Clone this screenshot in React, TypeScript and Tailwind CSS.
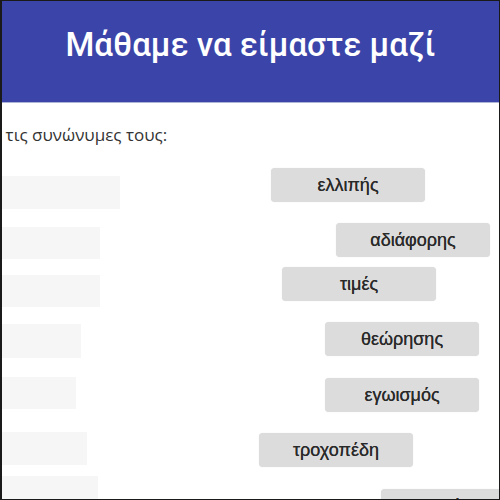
import React from "react";

const boxes = [
  { mt: "mt-[0px]", w: "w-[118px]", h: "h-[33px]" },
  { mt: "mt-[18px]", w: "w-[98px]", h: "h-[32px]" },
  { mt: "mt-[16px]", w: "w-[98px]", h: "h-[32px]" },
  { mt: "mt-[17px]", w: "w-[79px]", h: "h-[34px]" },
  { mt: "mt-[19px]", w: "w-[74px]", h: "h-[32px]" },
  { mt: "mt-[23px]", w: "w-[85px]", h: "h-[33px]" },
  { mt: "mt-[11px]", w: "w-[96px]", h: "h-[33px]" },
];

const buttons = [
  { label: "ελλιπής", mt: "mt-[0px]", ml: "ml-[269px]" },
  { label: "αδιάφορης", mt: "mt-[21px]", ml: "ml-[334px]" },
  { label: "τιμές", mt: "mt-[10px]", ml: "ml-[280px]" },
  { label: "θεώρησης", mt: "mt-[21px]", ml: "ml-[323px]" },
  { label: "εγωισμός", mt: "mt-[22px]", ml: "ml-[323px]" },
  { label: "τροχοπέδη", mt: "mt-[21px]", ml: "ml-[257px]" },
  { label: "ανεπάρκεια", mt: "mt-[22px]", ml: "ml-[379px]" },
];

export default function App() {
  return (
    <div className="w-[500px] h-[500px] overflow-hidden bg-white border border-[#1a1a1a] border-l-2 box-border">
      <div className="h-[101px] bg-[#3b44a9] flex items-center justify-center">
        <h1
          className="text-white text-[33px] font-medium leading-none -mt-[15px] pl-[0px]"
          style={{ fontFamily: "Roboto, 'Noto Sans', sans-serif" }}
        >
          Μάθαμε να είμαστε μαζί
        </h1>
      </div>
      <div className="h-[1px] bg-[#aeb3d8]" />
      <div className="overflow-hidden whitespace-nowrap">
        <p
          className="mt-[21px] ml-[-9px] text-[17px] font-medium leading-[22px] text-[#333333]"
          style={{ fontFamily: "'Open Sans', 'Noto Sans', sans-serif" }}
        >
          ς τις συνώνυμες τους:
        </p>
      </div>
      <div className="flex">
        <div className="flex flex-col mt-[30px] w-0 overflow-visible">
          {boxes.map((b, i) => (
            <div key={i} className={`${b.mt} ${b.w} ${b.h} shrink-0 bg-[#f6f6f6]`} />
          ))}
        </div>
        <div className="flex flex-col mt-[22px]">
          {buttons.map((b, i) => (
            <div
              key={i}
              className={`${b.mt} ${b.ml} w-[154px] h-[34px] shrink-0 rounded-[4px] bg-[#dcdcdc] shadow-[0_0_1px_rgba(0,0,0,0.15)] flex items-center justify-center text-[18px] text-[#2a2a2a] [text-shadow:0_0_0.5px_#2a2a2a]`}
              style={{ fontFamily: "'Liberation Sans', Arial, sans-serif" }}
            >
              {b.label}
            </div>
          ))}
        </div>
      </div>
    </div>
  );
}
